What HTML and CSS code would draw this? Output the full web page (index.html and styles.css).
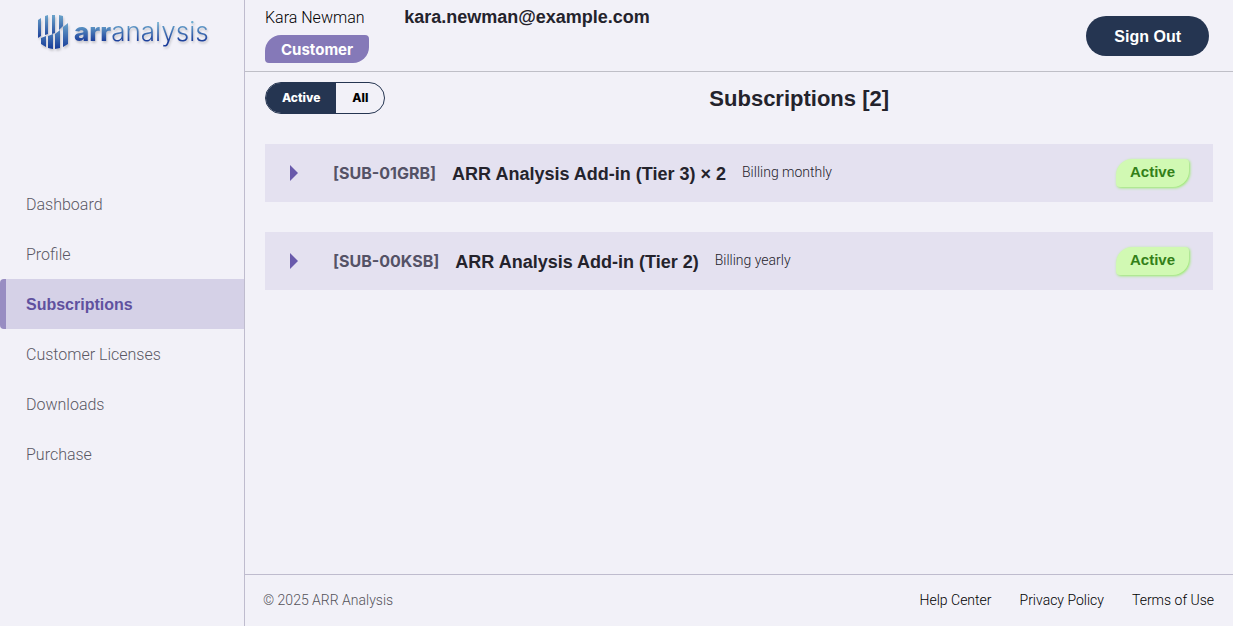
FILE: index.html
```html
<!DOCTYPE html>
<html lang="en">
<head>
<meta charset="utf-8">
<meta name="viewport" content="width=device-width, initial-scale=1">
<title>Subscriptions | ARR Analysis</title>
<link rel="stylesheet" href="styles.css">
</head>
<body>
<div class="app">
  <aside class="sidebar">
    <a class="logo" href="#" aria-label="ARR Analysis home">
      <svg class="logo-mark" viewBox="0 0 32 36" width="32" height="36" aria-hidden="true">
        <defs>
          <linearGradient id="top" gradientUnits="userSpaceOnUse" x1="0" y1="0" x2="0" y2="24"><stop offset="0" stop-color="#6fa9cd"/><stop offset="1" stop-color="#1c3f99"/></linearGradient>
          <linearGradient id="low" gradientUnits="userSpaceOnUse" x1="0" y1="8" x2="0" y2="35"><stop offset="0" stop-color="#70a9ce"/><stop offset="1" stop-color="#153a98"/></linearGradient>
        </defs>
        <path fill="url(#top)" d="M1 6l3-2v18l-3 2zM8 2l3-1v19l-3 1zM15 1h3v18l-3 1zM22 1l4 1v10l-4 4z"/>
        <path fill="url(#low)" d="M4 24l5-2v11l-5-3zM11 22l5-2v15l-5-1zM18 20l5-4v18l-5 1zM26 13l5-4v21l-5 3z"/>
      </svg>
      <span class="logo-text"><strong>arr</strong>analysis</span>
    </a>
    <nav class="nav" aria-label="Main">
      <a href="#">Dashboard</a>
      <a href="#">Profile</a>
      <a class="current" href="#" aria-current="page">Subscriptions</a>
      <a href="#">Customer Licenses</a>
      <a href="#">Downloads</a>
      <a href="#">Purchase</a>
    </nav>
  </aside>
  <div class="page">
    <header class="header">
      <div class="user">
        <span class="user-name">Kara Newman</span>
        <span class="role">Customer</span>
      </div>
      <strong class="email">kara.newman@example.com</strong>
      <button class="sign-out" type="button">Sign Out</button>
    </header>
    <main class="content">
      <div class="toolbar">
        <div class="toggle" role="group" aria-label="Filter">
          <button class="on" type="button" aria-pressed="true">Active</button>
          <button type="button" aria-pressed="false">All</button>
        </div>
        <h1>Subscriptions [2]</h1>
      </div>
      <details class="sub">
        <summary>
          <svg class="arrow" viewBox="0 0 8 16" width="8" height="16" aria-hidden="true"><path d="M0 0l8 8-8 8z"/></svg>
          <span class="sub-id">[SUB-01GRB]</span>
          <span class="sub-name">ARR Analysis Add-in (Tier 3) × 2</span>
          <span class="billing">Billing monthly</span>
          <span class="status">Active</span>
        </summary>
      </details>
      <details class="sub">
        <summary>
          <svg class="arrow" viewBox="0 0 8 16" width="8" height="16" aria-hidden="true"><path d="M0 0l8 8-8 8z"/></svg>
          <span class="sub-id">[SUB-00KSB]</span>
          <span class="sub-name">ARR Analysis Add-in (Tier 2)</span>
          <span class="billing">Billing yearly</span>
          <span class="status">Active</span>
        </summary>
      </details>
    </main>
    <footer class="footer">
      <span>© 2025 ARR Analysis</span>
      <nav class="links" aria-label="Footer">
        <a href="#">Help Center</a>
        <a href="#">Privacy Policy</a>
        <a href="#">Terms of Use</a>
      </nav>
    </footer>
  </div>
</div>
</body>
</html>
```

FILE: styles.css
```css
* { box-sizing: border-box; }
body {
  margin: 0;
  background: #f2f1f8;
  color: #24232c;
  font-family: "Liberation Sans", Arial, sans-serif;
}
a { color: inherit; text-decoration: none; }
button { font: inherit; border: 0; cursor: pointer; }

.app { display: flex; min-height: 100vh; }
.sidebar { flex: 0 0 245px; border-right: 1px solid #bfbcce; }
.logo {
  display: flex;
  align-items: center;
  gap: 5px;
  height: 64px;
  padding-left: 37px;
  filter: drop-shadow(1px 2px 1px #0000002e);
}
.logo-text {
  font-family: Inter, sans-serif;
  font-size: 26px;
  font-weight: 300;
  line-height: 32px;
  background: linear-gradient(#70aed0 20%, #193b99 80%);
  background-clip: text;
  color: transparent;
}
.logo-text strong { font-weight: 800; }
.nav { margin-top: 115px; }
.nav a {
  display: block;
  padding: 2px 0 0 20px;
  border-left: 6px solid transparent;
  font-family: Roboto, "Liberation Sans", sans-serif;
  font-size: 16px;
  font-weight: 300;
  line-height: 48px;
  color: #5a5864;
}
.nav .current {
  border-color: #988dc2;
  border-radius: 4px 0 0 4px;
  background: #d5d1e7;
  color: #60519f;
  font-family: "Liberation Sans", Arial, sans-serif;
  font-weight: 700;
}

.page { flex: 1; display: flex; flex-direction: column; min-width: 0; }
.header {
  display: flex;
  align-items: flex-start;
  min-height: 72px;
  padding: 6px 24px 8px 20px;
  border-bottom: 1px solid #bfbfc7;
}
.user { display: flex; flex-direction: column; align-items: flex-start; gap: 5px; }
.user-name {
  font-family: Roboto, "Liberation Sans", sans-serif;
  font-size: 16px;
  font-weight: 300;
  line-height: 24px;
  color: #000;
}
.role {
  padding: 1px 16px 0;
  border-radius: 16px 4px 16px 4px;
  background: #8579b8;
  color: #fff;
  font-family: Inter, sans-serif;
  font-size: 15px;
  font-weight: 700;
  line-height: 27px;
}
.email { margin-left: 35px; font-size: 18px; line-height: 22px; }
.sign-out {
  margin: 10px 0 0 auto;
  padding: 2px 28px 0;
  border-radius: 20px;
  background: #253551;
  color: #fff;
  font-size: 16px;
  font-weight: 700;
  line-height: 38px;
}

.content { flex: 1; display: flex; flex-direction: column; gap: 30px; padding: 10px 20px; }
.toolbar { display: flex; align-items: center; }
.toggle { display: flex; overflow: hidden; border: 1px solid #253551; border-radius: 16px; }
.toggle button {
  padding: 0 16px;
  background: transparent;
  color: #000;
  font-family: Inter, sans-serif;
  font-size: 12px;
  font-weight: 800;
  line-height: 30px;
}
.toggle .on { background: #253551; color: #fff; }
h1 { flex: 1; margin: 0; padding-top: 2px; text-align: center; font-size: 22px; line-height: 30px; font-weight: 700; }

.sub { background: #e4e1f0; }
.sub summary {
  display: flex;
  align-items: center;
  gap: 16px;
  min-height: 58px;
  padding: 0 24px 0 25px;
  cursor: pointer;
  list-style: none;
}
.arrow { margin-right: 19px; fill: #695aab; }
.sub-id { color: #545266; font-family: Inter, sans-serif; font-size: 16px; font-weight: 700; }
.sub-name { padding-top: 2px; font-size: 18px; font-weight: 700; }
.billing {
  padding-bottom: 3px;
  font-family: Roboto, "Liberation Sans", sans-serif;
  font-size: 14px;
  font-weight: 300;
}
.status {
  margin-left: auto;
  padding: 0 14px 2px;
  border-radius: 16px 4px 16px 4px;
  background: #d1f9b3;
  box-shadow: 1px 1px 3px #94ed62;
  color: #338018;
  font-size: 15px;
  font-weight: 700;
  line-height: 26px;
}

.footer {
  display: flex;
  align-items: center;
  justify-content: space-between;
  min-height: 52px;
  padding: 0 19px 2px 18px;
  border-top: 1px solid #bfbcce;
  font-family: Roboto, "Liberation Sans", sans-serif;
  font-size: 14px;
  font-weight: 300;
  color: #55535a;
}
.links { display: flex; gap: 28px; color: #000; }
```
